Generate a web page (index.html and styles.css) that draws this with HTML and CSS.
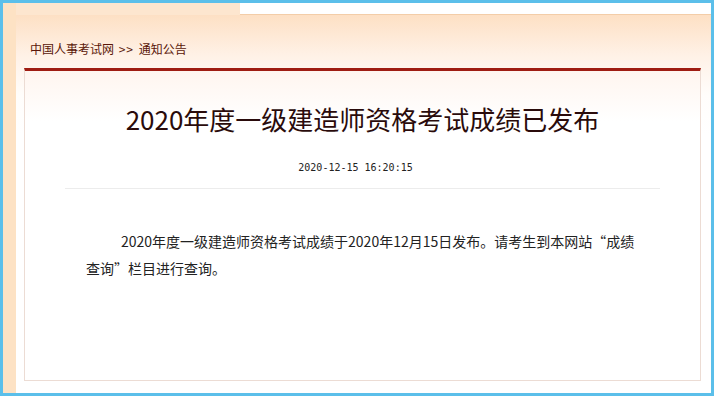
FILE: index.html
```html
<!DOCTYPE html>
<html lang="zh">
<head>
    <meta charset="UTF-8">
    <meta name="viewport" content="width=device-width, initial-scale=1.0">
    <title>2020年度一级建造师资格考试成绩已发布</title>
    <link rel="stylesheet" href="styles.css">
</head>
<body>
    <div class="frame">
        <div class="side"></div>
        <div class="main">
            <div class="tabs">
                <div class="tab-on"></div>
                <div class="tab-off"></div>
            </div>
            <div class="page">
                <div class="crumb">中国人事考试网 <span class="sep">&gt;&gt;</span> 通知公告</div>
                <div class="box">
                    <h1 class="title">2020年度一级建造师资格考试成绩已发布</h1>
                    <div class="date">2020-12-15 16:20:15</div>
                    <div class="line"></div>
                    <p class="text">2020年度一级建造师资格考试成绩于2020年12月15日发布。请考生到本网站“成绩查询”栏目进行查询。</p>
                </div>
            </div>
        </div>
    </div>
</body>
</html>
```

FILE: styles.css
```css
body {
    margin: 0;
    background: #5bbfea;
    font-family: "Noto Sans CJK SC", sans-serif;
}

.frame {
    margin: 3px;
    height: 390px;
    display: flex;
    background: #fff;
}

.side {
    width: 13px;
    background: #fde2c4;
}

.main {
    flex: 1;
    display: flex;
    flex-direction: column;
}

.tabs {
    height: 12px;
    display: flex;
}

.tab-on {
    width: 224px;
    background: #fde6cf;
}

.tab-off {
    flex: 1;
    background: #fff;
    border-bottom: 1px solid #f3cda8;
}

.page {
    flex: 1;
    padding: 0 10px 12px 8px;
    display: flex;
    flex-direction: column;
    background: linear-gradient(#fde0c4 0, #fff1e6 40px, #fffdfb 80px, #fff 120px);
}

.crumb {
    height: 53px;
    box-sizing: border-box;
    padding: 26px 0 0 6px;
    font-size: 12px;
    line-height: 16px;
    color: #5a1608;
}

.sep {
    margin: 0 2px;
    letter-spacing: 1px;
}

.box {
    flex: 1;
    border: 1px solid #ecdcd4;
    border-top: 3px solid #9f1c12;
    background: linear-gradient(#fff5ef, #fff 50px);
}

.title {
    margin: 0;
    padding-top: 30px;
    font-size: 26px;
    line-height: 36px;
    font-weight: normal;
    text-align: center;
    color: #2a0b0b;
}

.date {
    margin-top: 21px;
    padding-right: 14px;
    font-family: "DejaVu Sans Mono", monospace;
    font-size: 10px;
    line-height: 20px;
    text-align: center;
    color: #222;
}

.line {
    margin: 10px 40px 0;
    height: 1px;
    background: #ececec;
}

.text {
    margin: 0;
    padding: 39px 60px 0 61px;
    font-size: 14px;
    line-height: 27px;
    text-indent: 35px;
    color: #222;
}
```
